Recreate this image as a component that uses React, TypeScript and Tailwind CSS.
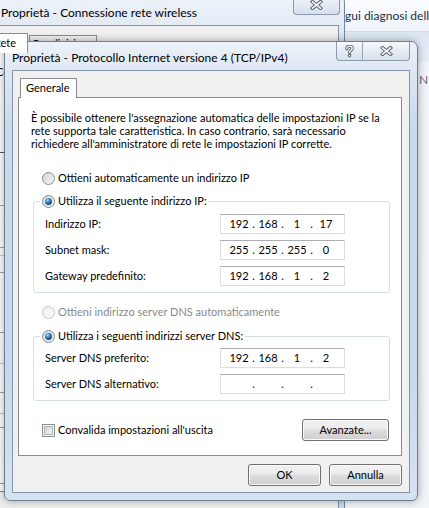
import { Fragment, useId } from "react";

function Radio({ checked = false, disabled = false }: { checked?: boolean; disabled?: boolean }) {
  const id = useId().replace(/[^a-zA-Z0-9]/g, "");
  return (
    <svg width="13" height="13" viewBox="0 0 13 13" className="shrink-0">
      <defs>
        <linearGradient id={`rf${id}`} x1="0" y1="0" x2="1" y2="1">
          <stop offset="0" stopColor={disabled ? "#efefef" : "#d2d2d2"} />
          <stop offset="1" stopColor={disabled ? "#fbfbfb" : "#f8f8f8"} />
        </linearGradient>
        <radialGradient id={`rd${id}`} cx="0.38" cy="0.32" r="0.75">
          <stop offset="0" stopColor="#b4e3ff" />
          <stop offset="0.4" stopColor="#3c86c0" />
          <stop offset="1" stopColor="#0c355c" />
        </radialGradient>
      </defs>
      <circle cx="6.5" cy="6.5" r="6" fill={`url(#rf${id})`} stroke={disabled ? "#c4c4c4" : "#8a8c8e"} />
      {checked && <circle cx="6.5" cy="6.5" r="4.6" fill="#dbe8f2" />}
      {checked && <circle cx="6.5" cy="6.5" r="3.4" fill={`url(#rd${id})`} />}
    </svg>
  );
}

function CheckBox() {
  const id = useId().replace(/[^a-zA-Z0-9]/g, "");
  return (
    <svg width="13" height="13" viewBox="0 0 13 13" className="shrink-0">
      <defs>
        <linearGradient id={`cb${id}`} x1="0" y1="0" x2="1" y2="1">
          <stop offset="0" stopColor="#cbcfd4" />
          <stop offset="1" stopColor="#f5f6f7" />
        </linearGradient>
      </defs>
      <rect x="0.5" y="0.5" width="12" height="12" fill="#f4f4f4" stroke="#8e8f8f" />
      <rect x="2.5" y="2.5" width="8" height="8" fill={`url(#cb${id})`} stroke="#b0b5ba" />
    </svg>
  );
}

function XGlyph() {
  return (
    <svg width="13" height="10" viewBox="0 0 13 10">
      <path d="M2.5 1.8 L10.5 8.2 M10.5 1.8 L2.5 8.2" stroke="#5a636d" strokeWidth="3.6" strokeLinecap="square" />
      <path d="M2.5 1.8 L10.5 8.2 M10.5 1.8 L2.5 8.2" stroke="#ffffff" strokeWidth="1.6" strokeLinecap="square" />
    </svg>
  );
}

function HelpGlyph() {
  return (
    <svg width="9" height="13" viewBox="0 0 9 13">
      <path d="M1.8 3.8 C1.8 2 3 1.2 4.5 1.2 C6.2 1.2 7.2 2.2 7.2 3.5 C7.2 5.2 4.6 5.4 4.6 7.4" fill="none" stroke="#5a636d" strokeWidth="3.2" strokeLinecap="round" />
      <circle cx="4.6" cy="10.6" r="1.8" fill="#5a636d" />
      <path d="M1.8 3.8 C1.8 2 3 1.2 4.5 1.2 C6.2 1.2 7.2 2.2 7.2 3.5 C7.2 5.2 4.6 5.4 4.6 7.4" fill="none" stroke="#ffffff" strokeWidth="1.3" strokeLinecap="round" />
      <circle cx="4.6" cy="10.6" r="0.8" fill="#ffffff" />
    </svg>
  );
}

function Btn({ children, className }: { children: React.ReactNode; className: string }) {
  return (
    <div
      className={`flex items-center justify-center rounded-[3px] border border-[#707070] bg-[linear-gradient(180deg,#f2f2f2_0%,#ebebeb_45%,#dddddd_50%,#cfcfcf_100%)] shadow-[inset_0_0_0_1px_#fbfbfb] ${className}`}
    >
      {children}
    </div>
  );
}

function IpBox({ parts }: { parts: string[] }) {
  return (
    <div className="flex h-[20px] w-[125px] items-center border border-[#dadde2] border-t-[#abadb3] bg-white pl-[5px]">
      {parts.map((p, i) => (
        <Fragment key={i}>
          {i > 0 && <span className="w-[3px] text-center">.</span>}
          <span className="w-[26px] text-center">{p}</span>
        </Fragment>
      ))}
    </div>
  );
}

function Group({
  legend,
  rows,
  className,
  rowsClass,
}: {
  legend: string;
  rows: [string, string[]][];
  className: string;
  rowsClass: string;
}) {
  return (
    <div className={`ml-[14px] mr-[11px] rounded-[3px] border border-[#d5dfe5] pb-[6px] ${className}`}>
      <div className="-mt-[8px] ml-[6px] flex h-[15px] w-fit items-center gap-[3px] bg-white px-[2px]">
        <Radio checked />
        <span>{legend}</span>
      </div>
      <div className={`flex flex-col gap-[6px] ${rowsClass}`}>
        {rows.map(([label, parts]) => (
          <div key={label} className="flex h-[20px] items-center pl-[11px]">
            <span className="w-[175px]">{label}</span>
            <IpBox parts={parts} />
          </div>
        ))}
      </div>
    </div>
  );
}

function BackgroundWindow() {
  return (
    <div className="absolute left-[-10px] top-[-5px] flex h-[560px] w-[355px] flex-col rounded-[7px] border border-[#75869b] bg-[linear-gradient(180deg,#eef3f9_0px,#e2eaf4_30px,#c9d9ec_80px,#cddbec_100%)]">
      <div className="flex h-[29px] items-start">
        <span className="ml-[10px] mt-[9px] whitespace-nowrap text-[12px] leading-[15px]">
          Proprietà - Connessione rete wireless
        </span>
        <div className="ml-auto mr-[4px] flex h-[19px] w-[47px] items-center justify-center rounded-b-[4px] border border-t-0 border-[#8d9aab] bg-[linear-gradient(180deg,#f4f7fb_0%,#e3eaf3_50%,#d6e0ec_100%)]">
          <XGlyph />
        </div>
      </div>
      <div className="mb-[7px] ml-[7px] mr-[5px] flex flex-1 flex-col border border-[#8393a8] bg-[#f0f0f0]">
        <div className="mt-[7px] flex items-start">
          <div className="relative z-10 -mb-[1px] ml-[-12px] flex h-[20px] w-[41px] items-center border border-b-0 border-[#898c95] bg-white pl-[6px]">
            Rete
          </div>
          <div className="ml-[1px] mt-[2px] flex h-[17px] w-[68px] items-center justify-center border border-b-0 border-[#898c95] bg-[linear-gradient(180deg,#f2f2f2,#e3e3e3)]">
            Condivisione
          </div>
        </div>
        <div className="ml-[-20px] mr-[5px] flex h-[440px] flex-col border border-[#898c95] bg-white">
          <span className="ml-[16px] mt-[12px] h-[14px] whitespace-nowrap leading-[14px]">Connetti tramite:</span>
          <div className="mt-[73px] h-[1px] w-[30px] bg-[#555555]" />
          <div className="mt-[52px] h-[1px] w-[30px] bg-[#a3a3a3]" />
          <div className="mt-[41px] h-[1px] w-[30px] bg-[#a3a3a3]" />
          <div className="mt-[7px] h-[1px] w-[30px] bg-[#c8c8c8]" />
          <div className="mt-[16px] h-[1px] w-[30px] bg-[#a3a3a3]" />
          <div className="mt-[59px] h-[1px] w-[30px] bg-[#a3a3a3]" />
          <div className="mt-[30px] h-[1px] w-[30px] bg-[#c8c8c8]" />
          <div className="mt-[28px] h-[1px] w-[30px] bg-[#a3a3a3]" />
          <div className="mt-[20px] h-[1px] w-[30px] bg-[#c8c8c8]" />
          <div className="mt-[13px] h-[1px] w-[30px] bg-[#a3a3a3]" />
          <div className="mt-[55px] h-[1px] w-[30px] bg-[#a3a3a3]" />
        </div>
      </div>
    </div>
  );
}

export default function App() {
  return (
    <div className="relative h-[508px] w-[429px] overflow-hidden bg-[#edf2f8] font-['Lato',sans-serif] text-[11px] text-black">
      {/* explorer window behind */}
      <div className="absolute left-[300px] top-0 flex h-[508px] w-[129px] flex-col">
        <div className="flex h-[32px] items-center border-b border-[#cfdae7] bg-[linear-gradient(180deg,#fbfcfe,#eef3f9)] pl-[45px] text-[12px] text-[#1e2f45]">
          <span className="whitespace-nowrap">gui diagnosi della connessione</span>
        </div>
        <div className="h-[30px] bg-[linear-gradient(180deg,#dde7f3,#e7eef7)]" />
        <div className="flex-1 bg-[#f1f5fa] pl-[119px] pt-[11px] text-[12px] leading-[14px] text-[#6b6b6b]">N</div>
      </div>

      <BackgroundWindow />

      {/* foreground dialog */}
      <div className="absolute left-[4px] top-[41px] flex h-[460px] w-[414px] flex-col rounded-t-[7px] rounded-b-[6px] border border-[#6f7f93] bg-[linear-gradient(180deg,#ecf2f9_0px,#dfe8f3_28px,#cadaed_80px,#c7d8ec_70%,#d5e2f0_100%)] shadow-[0_0_9px_rgba(0,0,0,0.35)]">
        <div className="flex h-[28px] items-start">
          <span className="ml-[7px] mt-[8px] whitespace-nowrap text-[12px] leading-[15px]">
            Proprietà - Protocollo Internet versione 4 (TCP/IPv4)
          </span>
          <div className="ml-auto mr-[7px] flex h-[19px] rounded-b-[4px] border border-t-0 border-[#8d9aab] bg-[linear-gradient(180deg,#f5f8fb_0%,#e6ecf4_50%,#d8e2ed_100%)]">
            <div className="flex w-[26px] items-center justify-center border-r border-[#9aa6b5]">
              <HelpGlyph />
            </div>
            <div className="flex w-[46px] items-center justify-center">
              <XGlyph />
            </div>
          </div>
        </div>

        <div className="mb-[7px] ml-[7px] mr-[7px] flex flex-1 flex-col border border-[#8393a8] bg-[#f0f0f0]">
          <div className="ml-[7px] mt-[7px] flex">
            <div className="relative z-10 -mb-[1px] flex h-[20px] w-[57px] items-center border border-b-0 border-[#898c95] bg-white pl-[5px]">
              Generale
            </div>
          </div>
          <div className="ml-[5px] mr-[7px] h-[359px] border border-[#898c95] bg-white">
            <p className="mt-[13px] whitespace-nowrap pl-[12px] leading-[13px]">
              È possibile ottenere l'assegnazione automatica delle impostazioni IP se la
              <br />
              rete supporta tale caratteristica. In caso contrario, sarà necessario
              <br />
              richiedere all'amministratore di rete le impostazioni IP corrette.
            </p>
            <div className="ml-[23px] mt-[21px] flex h-[15px] items-center gap-[3px]">
              <Radio />
              <span>Ottieni automaticamente un indirizzo IP</span>
            </div>
            <Group
              className="mt-[15px]"
              rowsClass="mt-[5px]"
              legend="Utilizza il seguente indirizzo IP:"
              rows={[
                ["Indirizzo IP:", ["192", "168", "1", "17"]],
                ["Subnet mask:", ["255", "255", "255", "0"]],
                ["Gateway predefinito:", ["192", "168", "1", "2"]],
              ]}
            />
            <div className="ml-[23px] mt-[12px] flex h-[15px] items-center gap-[3px] text-[#8a8a8a]">
              <Radio disabled />
              <span>Ottieni indirizzo server DNS automaticamente</span>
            </div>
            <Group
              className="mt-[16px]"
              rowsClass="mt-[4px]"
              legend="Utilizza i seguenti indirizzi server DNS:"
              rows={[
                ["Server DNS preferito:", ["192", "168", "1", "2"]],
                ["Server DNS alternativo:", ["", "", "", ""]],
              ]}
            />
            <div className="ml-[23px] mr-[12px] mt-[18px] flex h-[22px] items-center">
              <CheckBox />
              <span className="ml-[3px]">Convalida impostazioni all'uscita</span>
              <Btn className="ml-auto h-[22px] w-[87px]">Avanzate...</Btn>
            </div>
          </div>
          <div className="mr-[7px] mt-[8px] flex justify-end gap-[8px]">
            <Btn className="h-[22px] w-[73px]">OK</Btn>
            <Btn className="h-[22px] w-[73px]">Annulla</Btn>
          </div>
        </div>
      </div>
    </div>
  );
}
